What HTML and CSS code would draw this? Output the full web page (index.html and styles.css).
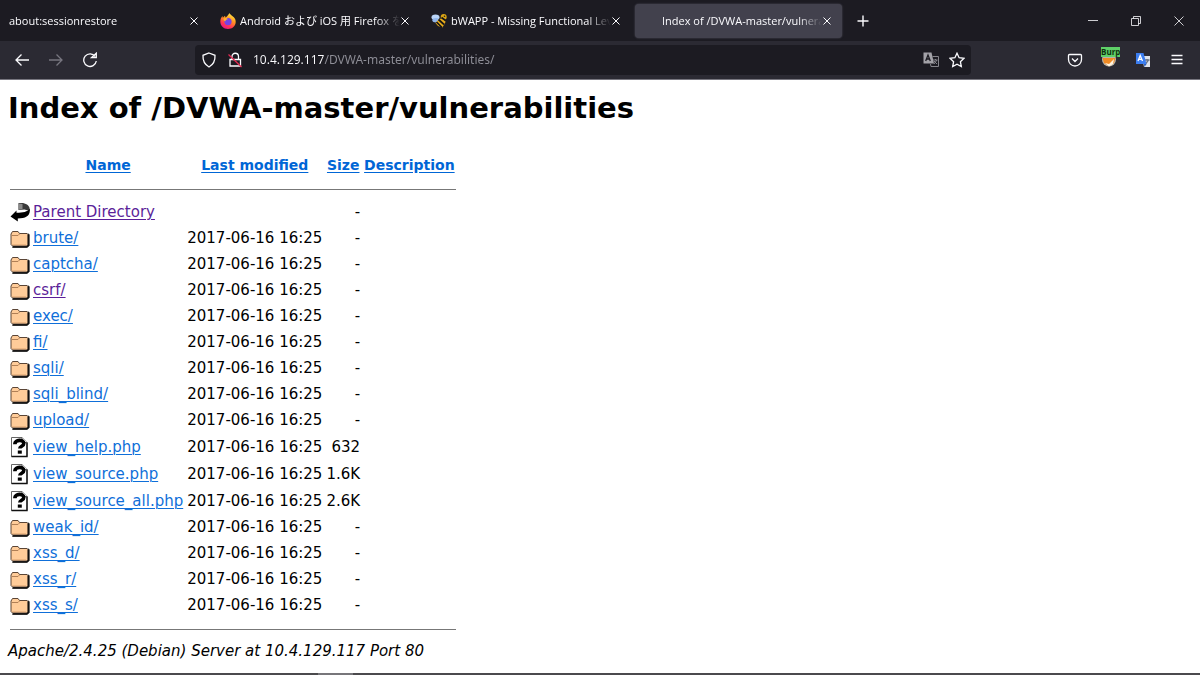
FILE: index.html
```html
<!DOCTYPE html>
<html lang="en">
<head>
  <meta charset="UTF-8" />
  <meta name="viewport" content="width=device-width, initial-scale=1.0" />
  <title>Index of /DVWA-master/vulnerabilities</title>
  <link rel="stylesheet" href="styles.css">
</head>
<body>
  <!-- Shared icons -->
  <svg class="sprite" aria-hidden="true">
    <symbol id="close" viewBox="0 0 10 10">
      <path d="M1.500 1.500l7 7M8.500 1.500l-7 7" fill="none" stroke="currentColor" stroke-width="1" />
    </symbol>
    <symbol id="folder" viewBox="0 0 20 22">
      <path d="M2 20.500h14.500l3-1.800V7.500l-1.500-1.200" fill="#222" />
      <path d="M1 7l1.500-2.500H8L9.500 6.500h7.500l1 1V17.500l-1 1.500H2.500L1 17.500z" fill="#ffcc99" stroke="#5a4536" stroke-width="1" />
      <path d="M18.500 7.500v11l-1.500 1.500H2.500" fill="none" stroke="#111" stroke-width="1.600" />
      <path d="M2 8.500h6l1.500-1.500" fill="none" stroke="#b07f55" stroke-width="1" />
      <path d="M2.500 17.500h14" fill="none" stroke="#d9a06c" stroke-width="1" stroke-dasharray="1 1" />
    </symbol>
    <symbol id="unknown" viewBox="0 0 20 22">
      <path d="M1.500 1.500H12l5 5v14H1.500z" fill="#fff" stroke="#666" stroke-width="1" />
      <path d="M1.500 20.500H17V6.500" fill="none" stroke="#111" stroke-width="1.400" />
      <path d="M12 1.500v5h5" fill="#fff" stroke="#555" stroke-width="1" />
      <path d="M4.800 8.200c0-5 9-5 9-.7 0 3-4 2.500-4 5" fill="none" stroke="#000" stroke-width="3.600" />
      <path d="M7.800 14.500h4v3.200h-4z" fill="#000" />
    </symbol>
    <symbol id="back" viewBox="0 0 20 22">
      <path d="M8.500 2h4.500c5 1 7.500 4 6.500 8l-5-1.500-6 .5z" fill="#3a3a3a" />
      <path d="M8.500 2.500l4 .5v5l-4 .8z" fill="#8a8a8a" />
      <path d="M19.800 8c.7 7-4 9.500-12 9.500V20.500L.5 15.500 6.500 9.500v2.300c6.500 0 11-1 13.300-4z" fill="#000" />
    </symbol>
  </svg>

  <div class="tabs">
    <div class="tab">
      <span class="title">about:sessionrestore</span>
      <button class="close" aria-label="Close tab"><svg><use href="#close" /></svg></button>
    </div>
    <div class="tab">
      <svg class="favicon" viewBox="0 0 16 16">
        <defs>
          <linearGradient id="fire" x1=".8" y1="0" x2=".3" y2="1">
            <stop offset="0" stop-color="#fff44f" />
            <stop offset=".4" stop-color="#ff9a1f" />
            <stop offset=".75" stop-color="#ff3750" />
            <stop offset="1" stop-color="#e5128f" />
          </linearGradient>
        </defs>
        <path d="M9.500 0c.3 2 4.500 3 5.800 6.500C17 12 13 16 8 16 3.500 16 .3 12.700.3 8.500.3 6.500 1 4.500 2.500 3l.3 1.700L5 2.800l.5 1.700C7 4 8 2 9.500 0z" fill="url(#fire)" />
        <circle cx="8" cy="8.600" r="3.600" fill="#7542e5" />
        <path d="M3.500 5.500c2-1 3.500-.5 4.500.8-2 .2-2.500 1-2.500 2-1.500-.3-2-1.500-2-2.800z" fill="#ffb52e" />
      </svg>
      <span class="title">Android および iOS 用 Firefox を外出先でも</span>
      <button class="close" aria-label="Close tab"><svg><use href="#close" /></svg></button>
    </div>
    <div class="tab">
      <svg class="favicon" viewBox="0 0 16 16">
        <ellipse cx="4.500" cy="4.200" rx="4" ry="2.800" fill="#b9d4f7" />
        <ellipse cx="5" cy="7.200" rx="3.600" ry="2.200" fill="#8fb4ea" />
        <circle cx="12.700" cy="4" r="3" fill="#dba514" />
        <path d="M8 6l5-1 1.500 4-3 5.500L7 13 4.500 10z" fill="#e8ac1c" />
        <path d="M7.500 6.500l5.500 5M5.500 9l5.500 5.500M10.500 4.500l4 3" fill="none" stroke="#151515" stroke-width="1.700" />
        <circle cx="13.500" cy="3.200" r=".8" fill="#222" />
      </svg>
      <span class="title">bWAPP - Missing Functional Level Access</span>
      <button class="close" aria-label="Close tab"><svg><use href="#close" /></svg></button>
    </div>
    <div class="tab active">
      <span class="favicon"></span>
      <span class="title">Index of /DVWA-master/vulnerabilities</span>
      <button class="close" aria-label="Close tab"><svg><use href="#close" /></svg></button>
    </div>
    <button class="new-tab" aria-label="New tab">
      <svg viewBox="0 0 12 12"><path d="M6 .5v11M.5 6h11" /></svg>
    </button>
    <div class="window-buttons">
      <button aria-label="Minimize"><svg viewBox="0 0 10 10"><path d="M0 4.500h10" /></svg></button>
      <button aria-label="Restore"><svg viewBox="0 0 10 10"><path d="M.5 2.500h7v7h-7zM2.500 2.500v-2h7v7h-2" /></svg></button>
      <button aria-label="Close"><svg viewBox="0 0 10 10"><path d="M.5.5l9 9M9.500.5l-9 9" /></svg></button>
    </div>
  </div>

  <div class="toolbar">
    <div class="nav">
      <button aria-label="Back"><svg viewBox="0 0 16 16"><path d="M15 8H2M7.500 2.500L2 8l5.500 5.500" /></svg></button>
      <button class="off" aria-label="Forward" disabled><svg viewBox="0 0 16 16"><path d="M1 8h13M8.500 2.500L14 8l-5.500 5.500" /></svg></button>
      <button aria-label="Reload"><svg viewBox="0 0 16 16"><path d="M13.200 4.500A6.300 6.300 0 1 0 14.300 9M9.500 5.700h4.800V1.200z" /></svg></button>
    </div>
    <div class="urlbar">
      <svg class="icon" viewBox="0 0 16 16"><path d="M8 1l6 2.300c.3 5.200-1.500 9.200-6 11.700-4.500-2.500-6.300-6.500-6-11.700z" /></svg>
      <svg class="icon" viewBox="0 0 16 16">
        <path d="M3 7.500h10.500V14H3zM5 7.500V4.500a3.200 3.200 0 0 1 6.500 0v3" />
        <path class="slash" d="M1.500 2.500l13 12.500" />
      </svg>
      <input class="url" type="text" aria-label="Address" value="10.4.129.117/DVWA-master/vulnerabilities/">
      <button aria-label="Translate page">
        <svg viewBox="0 0 16 16">
          <path class="fill" d="M.5.5h8L11 11.500H.5z" />
          <path class="thin" d="M9.500 4.500h6v10H8L7.500 12M10 8h4.500M12.500 7v1M11 12l3-4M11 9l3 3" />
          <path class="letter" d="M2.700 9L5 3l2.300 6M3.500 7h3" />
        </svg>
      </button>
      <button aria-label="Bookmark">
        <svg viewBox="0 0 16 16"><path d="M8 1.200l2.100 4.500 4.900.6-3.600 3.400.9 4.900L8 12.200l-4.300 2.400.9-4.900L1 6.300l4.900-.6z" /></svg>
      </button>
    </div>
    <div class="actions">
      <button aria-label="Pocket">
        <svg viewBox="0 0 16 16"><path d="M2.500 2.500h11c.6 0 1 .4 1 1v4a6.500 6.500 0 0 1-13 0v-4c0-.6.4-1 1-1zM5 6.500l3 3 3-3" /></svg>
      </button>
      <button class="proxy" aria-label="FoxyProxy">
        <svg viewBox="0 0 16 16">
          <circle cx="8" cy="7.500" r="7" fill="#b9b4aa" stroke="none" />
          <path d="M1.500 6h13l-1.500 5-5 3-5-3z" fill="#f08a24" stroke="none" />
          <path d="M4 11l4 1 5-5-1 5-4 2.500z" fill="#fff3e0" stroke="none" />
        </svg>
        <span class="badge">Burp</span>
      </button>
      <button aria-label="Google Translate">
        <svg viewBox="0 0 16 16">
          <path d="M7 4h8v11H9z" fill="#dfe3ea" stroke="none" />
          <path d="M10 8h4.500M12 7v1M10.500 12l3-4" stroke="#6b7686" />
          <path d="M1 1h7.500l3 11H1z" fill="#3b7df0" stroke="none" />
          <path d="M9 12h2.500L9.500 15z" fill="#2456b8" stroke="none" />
          <path d="M3 9l2.200-5.500L7.500 9M3.800 7.300h3" stroke="#fff" />
        </svg>
      </button>
      <button aria-label="Menu"><svg viewBox="0 0 16 16"><path d="M2.500 3.500h11M2.500 7.500h11M2.500 11.500h11" /></svg></button>
    </div>
  </div>

  <main>
    <h1>Index of /DVWA-master/vulnerabilities</h1>
    <table>
      <tr class="head"><th></th><th><a href="#">Name</a></th><th><a href="#">Last modified</a></th><th><a href="#">Size</a></th><th><a href="#">Description</a></th></tr>
      <tr><th class="rule" colspan="5"><hr></th></tr>
      <tr class="tall"><td class="type"><svg><use href="#back" /></svg></td><td><a class="visited" href="#">Parent Directory</a></td><td></td><td class="size">-</td><td></td></tr>
      <tr><td class="type"><svg><use href="#folder" /></svg></td><td><a href="#">brute/</a></td><td>2017-06-16 16:25</td><td class="size">-</td><td></td></tr>
      <tr><td class="type"><svg><use href="#folder" /></svg></td><td><a href="#">captcha/</a></td><td>2017-06-16 16:25</td><td class="size">-</td><td></td></tr>
      <tr><td class="type"><svg><use href="#folder" /></svg></td><td><a class="visited" href="#">csrf/</a></td><td>2017-06-16 16:25</td><td class="size">-</td><td></td></tr>
      <tr><td class="type"><svg><use href="#folder" /></svg></td><td><a href="#">exec/</a></td><td>2017-06-16 16:25</td><td class="size">-</td><td></td></tr>
      <tr><td class="type"><svg><use href="#folder" /></svg></td><td><a href="#">fi/</a></td><td>2017-06-16 16:25</td><td class="size">-</td><td></td></tr>
      <tr><td class="type"><svg><use href="#folder" /></svg></td><td><a href="#">sqli/</a></td><td>2017-06-16 16:25</td><td class="size">-</td><td></td></tr>
      <tr><td class="type"><svg><use href="#folder" /></svg></td><td><a href="#">sqli_blind/</a></td><td>2017-06-16 16:25</td><td class="size">-</td><td></td></tr>
      <tr><td class="type"><svg><use href="#folder" /></svg></td><td><a href="#">upload/</a></td><td>2017-06-16 16:25</td><td class="size">-</td><td></td></tr>
      <tr class="tall"><td class="type"><svg><use href="#unknown" /></svg></td><td><a href="#">view_help.php</a></td><td>2017-06-16 16:25</td><td class="size">632</td><td></td></tr>
      <tr class="tall"><td class="type"><svg><use href="#unknown" /></svg></td><td><a href="#">view_source.php</a></td><td>2017-06-16 16:25</td><td class="size">1.6K</td><td></td></tr>
      <tr class="tall"><td class="type"><svg><use href="#unknown" /></svg></td><td><a href="#">view_source_all.php</a></td><td>2017-06-16 16:25</td><td class="size">2.6K</td><td></td></tr>
      <tr><td class="type"><svg><use href="#folder" /></svg></td><td><a href="#">weak_id/</a></td><td>2017-06-16 16:25</td><td class="size">-</td><td></td></tr>
      <tr><td class="type"><svg><use href="#folder" /></svg></td><td><a href="#">xss_d/</a></td><td>2017-06-16 16:25</td><td class="size">-</td><td></td></tr>
      <tr><td class="type"><svg><use href="#folder" /></svg></td><td><a href="#">xss_r/</a></td><td>2017-06-16 16:25</td><td class="size">-</td><td></td></tr>
      <tr><td class="type"><svg><use href="#folder" /></svg></td><td><a href="#">xss_s/</a></td><td>2017-06-16 16:25</td><td class="size">-</td><td></td></tr>
      <tr><th class="rule last" colspan="5"><hr></th></tr>
    </table>
    <address>Apache/2.4.25 (Debian) Server at 10.4.129.117 Port 80</address>
  </main>

  <!-- top edge of the taskbar -->
  <footer class="taskbar"><div class="task"></div></footer>
</body>
</html>
```
FILE: styles.css
```css
* {
  box-sizing: border-box;
}
body {
  display: flex;
  flex-direction: column;
  min-height: 100vh;
  margin: 0;
  background: #fff;
  color: #000;
  font: 15px/20px "DejaVu Sans", Verdana, sans-serif;
}
.sprite {
  position: absolute;
  width: 0;
  height: 0;
}
button {
  display: flex;
  align-items: center;
  justify-content: center;
  padding: 0;
  border: none;
  background: none;
  color: inherit;
}

/* Tab strip */
.tabs {
  display: flex;
  align-items: center;
  gap: 4px;
  height: 41px;
  padding-left: 2px;
  background: #1c1b22;
  color: #fbfbfe;
  font: 11px/16px "Open Sans", "Noto Sans CJK JP", sans-serif;
}
.tab {
  display: flex;
  flex: 0 1 207px;
  align-items: center;
  min-width: 0;
  height: 34px;
  padding: 0 10px 0 7px;
  border-radius: 4px;
}
.tab.active {
  background: #42414d;
  box-shadow: 0 0 2px #55545f;
}
.favicon {
  flex: none;
  width: 16px;
  height: 16px;
  margin-right: 4px;
}
.title {
  flex: 1;
  overflow: hidden;
  white-space: nowrap;
  -webkit-mask-image: linear-gradient(to left, transparent, #000 24px);
  mask-image: linear-gradient(to left, transparent, #000 24px);
}
.close svg {
  width: 10px;
  height: 10px;
}
.new-tab {
  width: 34px;
  height: 34px;
}
.new-tab svg {
  width: 12px;
  height: 12px;
}
.new-tab path,
.window-buttons path {
  fill: none;
  stroke: currentColor;
}
.new-tab path {
  stroke-width: 1.4;
}
.window-buttons {
  display: flex;
  margin-left: auto;
}
.window-buttons button {
  width: 43px;
  height: 40px;
}
.window-buttons svg {
  width: 10px;
  height: 10px;
}
.window-buttons path {
  stroke-width: 0.8;
}

/* Navigation toolbar */
.toolbar {
  display: flex;
  align-items: center;
  height: 39px;
  border-bottom: 1px solid #77767f;
  background: #2b2a33;
  color: #fbfbfe;
}
.toolbar svg {
  width: 16px;
  height: 16px;
  fill: none;
  stroke: currentColor;
  stroke-width: 1.3;
}
.nav,
.actions {
  display: flex;
}
.nav {
  flex: 0 1 195px;
  padding-left: 5px;
}
.nav button,
.actions button {
  width: 34px;
  height: 34px;
}
.nav .off {
  color: #77767f;
}
.urlbar {
  display: flex;
  flex: 0 1 776px;
  align-items: center;
  gap: 10px;
  height: 30px;
  padding: 0 6px;
  border-radius: 4px;
  background: #1c1b22;
}
.urlbar .slash {
  stroke: #e22850;
}
.urlbar .fill {
  fill: #a3a2a8;
  stroke: none;
}
.urlbar .thin {
  stroke: #85848b;
  stroke-width: 1;
}
.urlbar .letter {
  stroke: #1c1b22;
}
.url {
  flex: 1;
  min-width: 0;
  padding: 0;
  border: none;
  outline: none;
  /* host is bright, the path is dimmed */
  background: linear-gradient(to right, #fbfbfe 71px, #8f8f98 71px);
  -webkit-background-clip: text;
  background-clip: text;
  color: transparent;
  font: 12px/20px "Noto Sans", sans-serif;
}
.actions {
  flex: 1;
  justify-content: flex-end;
  padding-right: 6px;
}
.proxy {
  position: relative;
}
.badge {
  position: absolute;
  top: 4px;
  left: 9px;
  width: 19px;
  height: 10px;
  overflow: hidden;
  background: #5fd068;
  color: #10300f;
  font: bold 8px/10px "Open Sans", sans-serif;
  text-align: left;
}

/* Directory listing */
main {
  flex: 1;
  padding: 10px 8px;
}
h1 {
  margin: 0 0 23px;
  font-size: 29px;
  line-height: 36px;
}
table {
  border-spacing: 2px;
}
th,
td {
  height: 24px;
  padding: 0 1px;
  white-space: nowrap;
}
th {
  font-size: 14px;
}
.head th {
  height: 28px;
}
.tall td {
  height: 25px;
}
.type {
  padding: 0;
}
.type svg {
  display: block;
  width: 20px;
  height: 22px;
}
.size {
  text-align: right;
}
.rule {
  height: 16px;
  padding: 0;
}
.rule.last {
  height: 20px;
}
hr {
  margin: 0;
  border: none;
  border-top: 1px solid #777;
}
a {
  color: #0066d6;
  text-underline-offset: 2px;
}
td a {
  color: #0f6fd9;
  text-decoration-thickness: 1px;
}
a.visited {
  color: #5b1f99;
}
address {
  font-style: italic;
}

.taskbar {
  height: 2px;
  padding-left: 318px;
  background: #4b4a4d;
}
.task {
  width: 35px;
  height: 2px;
  background: #77767a;
}
```
